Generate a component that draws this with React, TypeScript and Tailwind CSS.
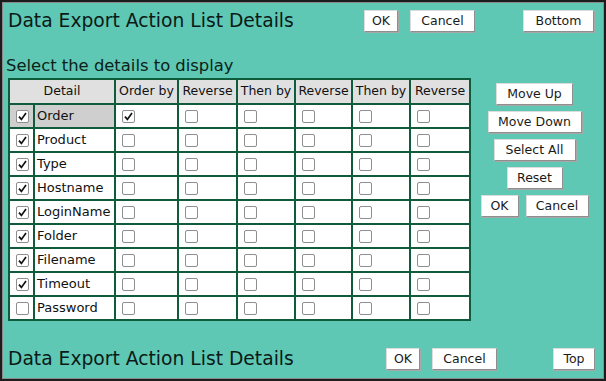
import React from "react";

const rows: { name: string; on: boolean }[] = [
  { name: "Order", on: true },
  { name: "Product", on: true },
  { name: "Type", on: true },
  { name: "Hostname", on: true },
  { name: "LoginName", on: true },
  { name: "Folder", on: true },
  { name: "Filename", on: true },
  { name: "Timeout", on: true },
  { name: "Password", on: false },
];

const heads = ["Order by", "Reverse", "Then by", "Reverse", "Then by", "Reverse"];

function Box({ checked }: { checked?: boolean }) {
  return (
    <span className="inline-flex w-[13px] h-[13px] shrink-0 items-center justify-center bg-white border border-[#8e8e8e] rounded-[2px]">
      {checked ? (
        <svg width="11" height="11" viewBox="0 0 11 11">
          <path d="M2 5.6 L4.4 8.4 L9 2" fill="none" stroke="#111" strokeWidth="1.7" />
        </svg>
      ) : null}
    </span>
  );
}

function Btn({ w, children }: { w: string; children: React.ReactNode }) {
  return (
    <button
      className={`${w} h-[22px] shrink-0 flex items-center justify-center bg-white text-[12.5px] text-[#1a1a1a] border border-[#dcdcdc] border-r-[#8e8e8e] border-b-[#8e8e8e] shadow-[1px_1px_0_0_#a8a8a8] leading-none`}
    >
      {children}
    </button>
  );
}

export default function App() {
  return (
    <div className="w-[606px] h-[381px] bg-[#5ec8b5] border-2 border-[#1c1c1c] shadow-[inset_1px_1px_0_0_#8a8a8a,inset_-1px_-1px_0_0_#8a8a8a] flex flex-col font-['DejaVu_Sans',sans-serif] text-[#111] overflow-hidden">
      {/* top row */}
      <div className="flex items-center h-[22px] mt-[8px] pl-[6px]">
        <div className="text-[18.72px] leading-[22px] text-[#0c1a15] flex-1">Data Export Action List Details</div>
        <Btn w="w-[34px]">OK</Btn>
        <div className="w-[12px]" />
        <Btn w="w-[65px]">Cancel</Btn>
        <div className="w-[48px]" />
        <Btn w="w-[71px]">Bottom</Btn>
        <div className="w-[10px]" />
      </div>

      <div className="mt-[24px] pl-[4px] text-[16.4px] leading-[19px] text-[#0c1f18]">Select the details to display</div>

      <div className="flex mt-[3px] pl-[6px]">
        <div className="grid grid-cols-[23px_79px_61px_57px_56px_55px_56px_58px] grid-rows-[23px_repeat(9,22px)] gap-[2px] p-[2px] bg-[#0f5c3c] w-[463px] text-[13px]">
          <div className="col-span-2 bg-[#e0e0e0] flex items-center justify-center text-[12.5px]">Detail</div>
          {heads.map((h, i) => (
            <div key={i} className="bg-[#e0e0e0] flex items-center justify-center text-[12.5px] whitespace-nowrap">
              {h}
            </div>
          ))}
          {rows.map((r, ri) => (
            <React.Fragment key={r.name}>
              <div className={`${ri === 0 ? "bg-[#cfcfcf]" : "bg-white"} flex items-center justify-center pl-[1px]`}>
                <Box checked={r.on} />
              </div>
              <div className={`${ri === 0 ? "bg-[#cfcfcf]" : "bg-white"} flex items-center pl-[2px]`}>{r.name}</div>
              {heads.map((_, ci) => (
                <div key={ci} className="bg-white flex items-center pl-[6px]">
                  <Box checked={ri === 0 && ci === 0} />
                </div>
              ))}
            </React.Fragment>
          ))}
        </div>
        <div className="w-[127px] flex flex-col items-center pt-[5px] gap-[6px]">
          <Btn w="w-[77px]">Move Up</Btn>
          <Btn w="w-[94px]">Move Down</Btn>
          <Btn w="w-[82px]">Select All</Btn>
          <Btn w="w-[56px]">Reset</Btn>
          <div className="flex gap-[7px]">
            <Btn w="w-[38px]">OK</Btn>
            <Btn w="w-[63px]">Cancel</Btn>
          </div>
        </div>
      </div>

      <div className="flex items-center h-[22px] mt-auto mb-[9px] pl-[6px]">
        <div className="text-[18.72px] leading-[22px] text-[#0c1a15] flex-1">Data Export Action List Details</div>
        <Btn w="w-[34px]">OK</Btn>
        <div className="w-[12px]" />
        <Btn w="w-[65px]">Cancel</Btn>
        <div className="w-[56px]" />
        <Btn w="w-[42px]">Top</Btn>
        <div className="w-[9px]" />
      </div>
    </div>
  );
}
